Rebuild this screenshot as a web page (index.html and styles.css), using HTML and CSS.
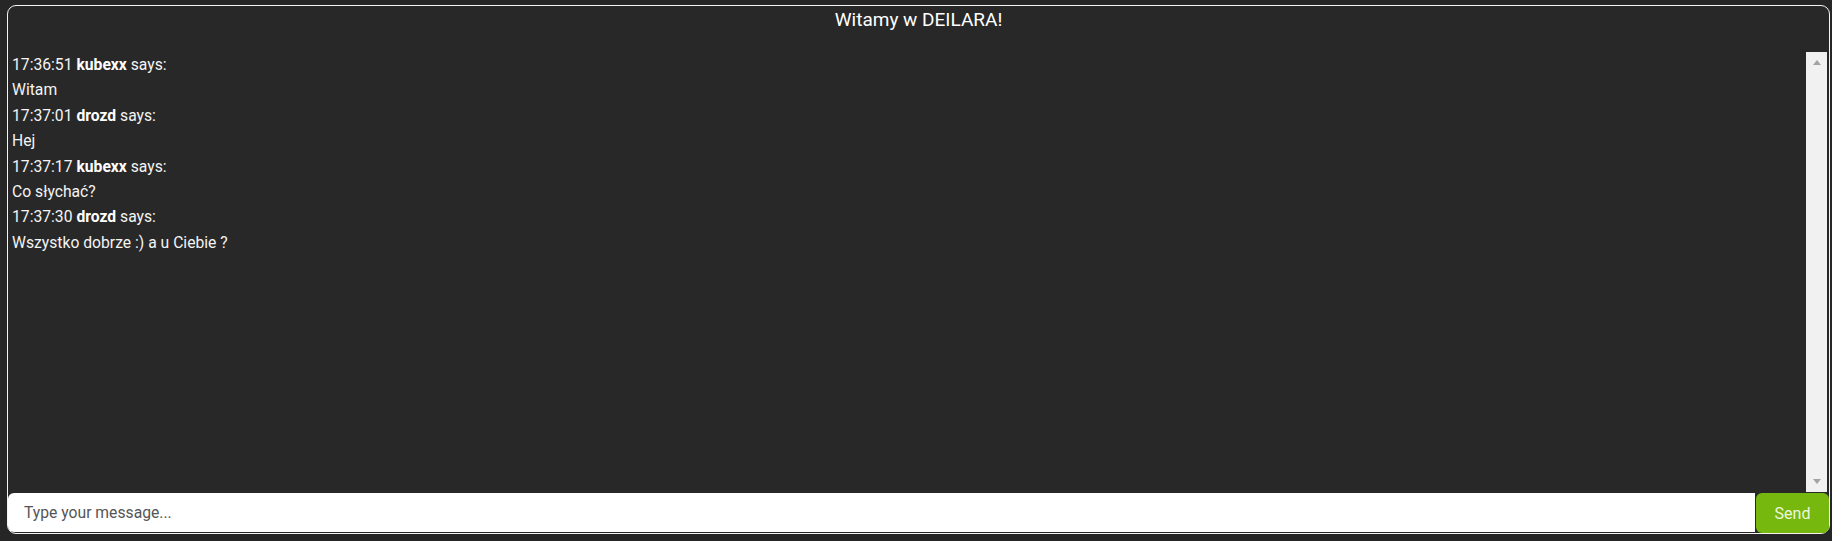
FILE: index.html
```html
<!DOCTYPE html>
<html lang="pl">
<head>
<meta charset="utf-8">
<title>DEILARA chat</title>
<link rel="stylesheet" href="styles.css">
</head>
<body>
<div class="chat">
  <div class="chat-title">Witamy w DEILARA!</div>
  <div class="chat-body">
    <div class="messages">
      <div class="line">17:36:51 <b>kubexx</b> says:</div>
      <div class="line">Witam</div>
      <div class="line">17:37:01 <b>drozd</b> says:</div>
      <div class="line">Hej</div>
      <div class="line">17:37:17 <b>kubexx</b> says:</div>
      <div class="line">Co słychać?</div>
      <div class="line">17:37:30 <b>drozd</b> says:</div>
      <div class="line">Wszystko dobrze :) a u Ciebie ?</div>
    </div>
    <div class="scrollbar">
      <span class="arrow arrow-up"></span>
      <span class="arrow arrow-down"></span>
    </div>
  </div>
  <form class="composer">
    <input class="composer-input" type="text" placeholder="Type your message...">
    <button class="composer-send" type="button">Send</button>
  </form>
</div>
</body>
</html>
```

FILE: styles.css
```css
html, body {
  margin: 0;
  padding: 0;
  background: #262626;
}

body {
  padding: 5px 2px 7px 7px;
  font-family: Roboto, "Liberation Sans", Arial, sans-serif;
  color: #f2f2f2;
}

.chat {
  height: 529px;
  box-sizing: border-box;
  border: 1px solid #f4f4f4;
  border-radius: 9px;
  background: #282828;
  display: flex;
  flex-direction: column;
}

.chat-title {
  height: 46px;
  flex: none;
  padding-top: 1px;
  box-sizing: border-box;
  line-height: 26px;
  text-align: center;
  font-size: 19px;
  color: #ffffff;
}

.chat-body {
  height: 440px;
  flex: none;
  display: flex;
}

.messages {
  flex: 1;
  padding-left: 4px;
  font-size: 15.7px;
  line-height: 25.4px;
  color: #f4f4f4;
}

.messages b {
  font-weight: 700;
  color: #ffffff;
}

.scrollbar {
  width: 21px;
  margin-right: 2px;
  background: #f1f1f1;
  display: flex;
  flex-direction: column;
  justify-content: space-between;
  align-items: center;
  padding: 8px 0;
  box-sizing: border-box;
}

.arrow {
  width: 0;
  height: 0;
  border-left: 4.5px solid transparent;
  border-right: 4.5px solid transparent;
}

.arrow-up {
  border-bottom: 5px solid #a3a3a3;
}

.arrow-down {
  border-top: 5px solid #a3a3a3;
}

.composer {
  margin: 1px 0 0 0;
  height: 39px;
  flex: none;
  display: flex;
  align-items: flex-start;
}

.composer-input {
  flex: 1;
  height: 39px;
  box-sizing: border-box;
  margin: 0;
  border: none;
  border-radius: 6px 0 0 6px;
  background: #ffffff;
  padding: 0 16px;
  font-family: Roboto, "Liberation Sans", Arial, sans-serif;
  font-size: 15.7px;
  color: #333;
  outline: none;
}

.composer-input::placeholder {
  color: #555555;
}

.composer-send {
  width: 73px;
  height: 40px;
  margin-left: 1px;
  border: none;
  border-radius: 6px;
  background: #77b80f;
  color: #eef7dd;
  font-family: Roboto, "Liberation Sans", Arial, sans-serif;
  font-size: 16px;
  padding: 0;
}
```
